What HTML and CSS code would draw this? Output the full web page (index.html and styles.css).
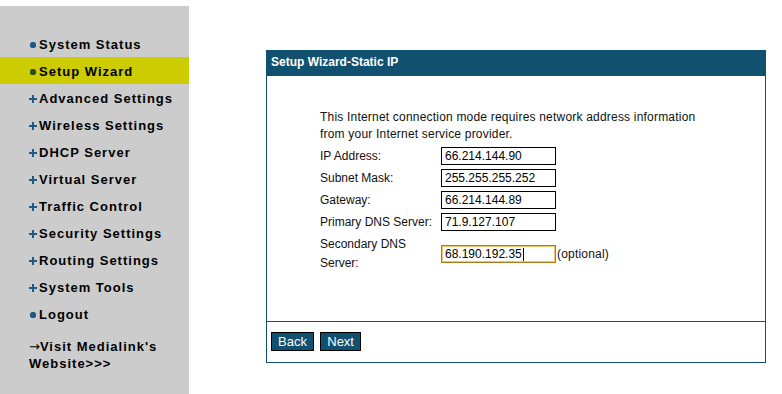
FILE: index.html
```html
<!DOCTYPE html>
<html lang="en">
<head>
    <meta charset="UTF-8">
    <title>Setup Wizard - Static IP</title>
    <link rel="stylesheet" href="styles.css">
</head>
<body>
    <div class="layout">
        <div class="sidebar">
            <ul class="menu">
                <li><span class="bullet"><svg width="8" height="8" viewBox="0 0 8 8"><path d="M2.5 1h3l1.5 1.5v3l-1.5 1.5h-3l-1.5-1.5v-3z"/></svg></span>System Status</li>
                <li class="active"><span class="bullet"><svg width="8" height="8" viewBox="0 0 8 8"><path d="M2.5 1h3l1.5 1.5v3l-1.5 1.5h-3l-1.5-1.5v-3z"/></svg></span>Setup Wizard</li>
                <li><span class="bullet"><svg width="8" height="8" viewBox="0 0 8 8"><path d="M3 0h2v3h3v2h-3v3h-2v-3h-3v-2h3z"/></svg></span>Advanced Settings</li>
                <li><span class="bullet"><svg width="8" height="8" viewBox="0 0 8 8"><path d="M3 0h2v3h3v2h-3v3h-2v-3h-3v-2h3z"/></svg></span>Wireless Settings</li>
                <li><span class="bullet"><svg width="8" height="8" viewBox="0 0 8 8"><path d="M3 0h2v3h3v2h-3v3h-2v-3h-3v-2h3z"/></svg></span>DHCP Server</li>
                <li><span class="bullet"><svg width="8" height="8" viewBox="0 0 8 8"><path d="M3 0h2v3h3v2h-3v3h-2v-3h-3v-2h3z"/></svg></span>Virtual Server</li>
                <li><span class="bullet"><svg width="8" height="8" viewBox="0 0 8 8"><path d="M3 0h2v3h3v2h-3v3h-2v-3h-3v-2h3z"/></svg></span>Traffic Control</li>
                <li><span class="bullet"><svg width="8" height="8" viewBox="0 0 8 8"><path d="M3 0h2v3h3v2h-3v3h-2v-3h-3v-2h3z"/></svg></span>Security Settings</li>
                <li><span class="bullet"><svg width="8" height="8" viewBox="0 0 8 8"><path d="M3 0h2v3h3v2h-3v3h-2v-3h-3v-2h3z"/></svg></span>Routing Settings</li>
                <li><span class="bullet"><svg width="8" height="8" viewBox="0 0 8 8"><path d="M3 0h2v3h3v2h-3v3h-2v-3h-3v-2h3z"/></svg></span>System Tools</li>
                <li><span class="bullet"><svg width="8" height="8" viewBox="0 0 8 8"><path d="M2.5 1h3l1.5 1.5v3l-1.5 1.5h-3l-1.5-1.5v-3z"/></svg></span>Logout</li>
            </ul>
            <div class="visit"><span class="arrow">&rarr;</span>Visit Medialink's<br>Website&gt;&gt;&gt;</div>
        </div>

        <div class="main">
            <div class="panel">
                <div class="panel-title">Setup Wizard-Static IP</div>
                <div class="panel-body">
                    <p class="intro">This Internet connection mode requires network address information<br>from your Internet service provider.</p>
                    <div class="form">
                        <label>IP Address:</label>
                        <div class="field"><input type="text" value="66.214.144.90"></div>
                        <label>Subnet Mask:</label>
                        <div class="field"><input type="text" value="255.255.255.252"></div>
                        <label>Gateway:</label>
                        <div class="field"><input type="text" value="66.214.144.89"></div>
                        <label>Primary DNS Server:</label>
                        <div class="field"><input type="text" value="71.9.127.107"></div>
                        <label class="two-line">Secondary DNS<br>Server:</label>
                        <div class="field">
                            <span class="input-wrap"><input type="text" class="focused" value="68.190.192.35"><span class="caret"></span></span>
                            <span class="note">(optional)</span>
                        </div>
                    </div>
                </div>
                <div class="panel-foot">
                    <button>Back</button>
                    <button>Next</button>
                </div>
            </div>
        </div>
    </div>
</body>
</html>
```

FILE: styles.css
```css
html, body {
    margin: 0;
    padding: 0;
    background: #fff;
}
body {
    font-family: "Liberation Sans", Arial, sans-serif;
    font-size: 12px;
    color: #111;
}
.layout {
    display: flex;
    align-items: stretch;
    min-height: 100vh;
}
.sidebar {
    width: 189px;
    flex-shrink: 0;
    margin-top: 6px;
    padding-top: 24px;
    background: #cccccc;
}
.menu {
    list-style: none;
    margin: 0;
    padding: 0;
}
.menu li {
    width: 160px;
    height: 27px;
    line-height: 29px;
    padding-left: 29px;
    font-size: 13px;
    font-weight: bold;
    letter-spacing: 1px;
    color: #000;
    white-space: nowrap;
}
.menu li.active {
    background: #cccc00;
}
.bullet {
    display: inline-block;
    width: 8px;
    margin-right: 2px;
}
.bullet svg {
    display: block;
    fill: #1d5a84;
}
.active .bullet svg {
    fill: #2c4f1c;
}
.visit {
    margin-top: 11px;
    padding-left: 29px;
    font-size: 13px;
    font-weight: bold;
    letter-spacing: 1px;
    line-height: 17px;
    color: #000;
}
.arrow {
    font-family: "DejaVu Sans", sans-serif;
    font-weight: normal;
    letter-spacing: 0;
}
.main {
    margin-left: 77px;
    padding-top: 50px;
}
.panel {
    width: 498px;
    border: 1px solid #11506f;
    border-top: none;
}
.panel-title {
    height: 26px;
    line-height: 25px;
    margin: 0 -1px;
    padding-left: 5px;
    background: #11506f;
    color: #fff;
    font-weight: bold;
    font-size: 12px;
}
.panel-body {
    height: 246px;
    padding: 33px 0 0 53px;
    box-sizing: border-box;
    border-bottom: 1px solid #11506f;
}
.intro {
    margin: 0 0 4px;
    line-height: 17px;
    letter-spacing: 0.2px;
}
.form {
    display: grid;
    grid-template-columns: 121px auto;
    row-gap: 4px;
    align-items: center;
}
.form label {
    line-height: 18px;
}
.form label.two-line {
    line-height: 19px;
}
.field {
    display: flex;
    align-items: center;
}
.field input {
    width: 115px;
    height: 18px;
    box-sizing: border-box;
    margin: 0;
    padding: 0 3px;
    border: 1px solid #000;
    font-family: "Liberation Sans", Arial, sans-serif;
    font-size: 12px;
    color: #000;
    background: #fff;
    outline: none;
}
.field input.focused {
    border-color: #b07a1c;
    box-shadow: inset 0 0 0 1px #f2c46c;
}
.input-wrap {
    position: relative;
    display: inline-block;
}
.caret {
    position: absolute;
    left: 82px;
    top: 3px;
    width: 1px;
    height: 13px;
    background: #000;
}
.note {
    margin-left: 1px;
    letter-spacing: 0.2px;
}
.panel-foot {
    height: 40px;
    padding: 10px 0 0 4px;
    box-sizing: border-box;
}
.panel-foot button {
    height: 19px;
    margin: 0 3px 0 0;
    padding: 0 6px;
    border: 1px solid #000;
    background: #11506f;
    color: #fff;
    font-family: "Liberation Sans", Arial, sans-serif;
    font-size: 13px;
    line-height: 15px;
    cursor: pointer;
}
```
